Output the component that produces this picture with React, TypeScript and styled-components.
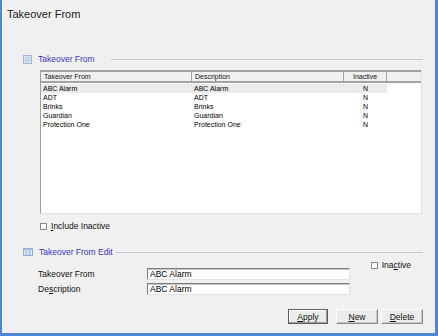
import React from 'react';
import styled, { createGlobalStyle } from 'styled-components';

interface TakeoverRow {
  name: string;
  description: string;
  inactive: string;
}

const rows: TakeoverRow[] = [
  { name: 'ABC Alarm', description: 'ABC Alarm', inactive: 'N' },
  { name: 'ADT', description: 'ADT', inactive: 'N' },
  { name: 'Brinks', description: 'Brinks', inactive: 'N' },
  { name: 'Guardian', description: 'Guardian', inactive: 'N' },
  { name: 'Protection One', description: 'Protection One', inactive: 'N' },
];

const GridIcon = () => (
  <svg width="9" height="9" viewBox="0 0 9 9">
    <rect x="0.5" y="0.5" width="8" height="8" fill="#d6e4f5" stroke="#9db5d6" />
    <rect x="2" y="2" width="5" height="5" fill="#c4d6ec" />
  </svg>
);

const FormIcon = () => (
  <svg width="10" height="8" viewBox="0 0 10 8">
    <rect x="0.5" y="0.5" width="9" height="7" fill="#e4ecf7" stroke="#93acd0" />
    <rect x="1" y="1" width="8" height="1.5" fill="#a9c0e0" />
    <rect x="2" y="3.5" width="2" height="1" fill="#93acd0" />
    <rect x="5" y="3.5" width="3" height="1" fill="#93acd0" />
    <rect x="2" y="5.5" width="2" height="1" fill="#93acd0" />
    <rect x="5" y="5.5" width="3" height="1" fill="#93acd0" />
  </svg>
);

function App() {
  return (
    <>
      <GlobalStyle />
      <Window>
        <Title>Takeover From</Title>

        <Section>
          <SectionHeader>
            <GridIcon />
            <SectionTitle>Takeover From</SectionTitle>
            <SectionRule $offset={16} />
          </SectionHeader>

          <Grid>
            <HeaderRow>
              <HeaderCell $width={151}>Takeover From</HeaderCell>
              <HeaderCell $width={152}>Description</HeaderCell>
              <HeaderCell $width={43} $center>
                Inactive
              </HeaderCell>
              <HeaderFiller />
            </HeaderRow>
            <GridBody>
              {rows.map((row, i) => (
                <Row key={row.name} $selected={i === 0}>
                  <Cell $width={151}>{row.name}</Cell>
                  <Cell $width={152}>{row.description}</Cell>
                  <Cell $width={43} $center>
                    {row.inactive}
                  </Cell>
                </Row>
              ))}
            </GridBody>
          </Grid>

          <CheckRow>
            <CheckBox />
            <span>
              <u>I</u>nclude Inactive
            </span>
          </CheckRow>
        </Section>

        <EditSection>
          <SectionHeader>
            <FormIcon />
            <SectionTitle>Takeover From Edit</SectionTitle>
            <SectionRule $offset={2} />
          </SectionHeader>

          <FormBody>
            <Fields>
              <FieldRow>
                <Label>Takeover From</Label>
                <TextBox defaultValue="ABC Alarm" />
              </FieldRow>
              <FieldRow>
                <Label>
                  De<u>s</u>cription
                </Label>
                <TextBox defaultValue="ABC Alarm" />
              </FieldRow>
            </Fields>
            <InactiveCheck>
              <CheckBox />
              <span>
                Ina<u>c</u>tive
              </span>
            </InactiveCheck>
          </FormBody>

          <Buttons>
            <Button $primary>
              <u>A</u>pply
            </Button>
            <Button>
              <u>N</u>ew
            </Button>
            <Button>
              <u>D</u>elete
            </Button>
          </Buttons>
        </EditSection>
      </Window>
    </>
  );
}

export default App;

const GlobalStyle = createGlobalStyle`
  html, body {
    margin: 0;
    padding: 0;
    background: #ffffff;
  }
  * {
    box-sizing: border-box;
  }
`;

const Window = styled.div`
  width: 438px;
  height: 336px;
  display: flex;
  flex-direction: column;
  background: #f0f0f0;
  border-left: 2px solid #4f87d8;
  border-right: 3px solid #4f87d8;
  border-bottom: 3px solid #4f87d8;
  font-family: 'Liberation Sans', Arial, sans-serif;
  color: #1e1e1e;
  overflow: hidden;
`;

const Title = styled.div`
  margin: 7px 0 0 5px;
  height: 14px;
  line-height: 14px;
  font-size: 11px;
  color: #1a1a1a;
`;

const Section = styled.div`
  margin-top: 32px;
  padding: 0 12px 0 21px;
  display: flex;
  flex-direction: column;
`;

const EditSection = styled(Section)`
  margin-top: 15px;
`;

const SectionHeader = styled.div`
  height: 12px;
  display: flex;
  align-items: center;

  svg {
    flex: none;
    margin-right: 6px;
  }
`;

const SectionTitle = styled.span`
  font-size: 8.5px;
  color: #3a35cf;
  white-space: nowrap;
`;

const SectionRule = styled.div<{ $offset: number }>`
  flex: 1;
  height: 1px;
  margin-left: ${(p) => p.$offset}px;
  background: #c9c9c9;
`;

const Grid = styled.div`
  margin: 5px 0 0 17px;
  width: 382px;
  height: 144px;
  display: flex;
  flex-direction: column;
  background: #ffffff;
  border-left: 1px solid #a0a0a0;
  border-bottom: 1px solid #e2e2e2;
  border-right: 1px solid #e2e2e2;
  font-size: 7px;
  color: #000;
`;

const HeaderRow = styled.div`
  height: 13px;
  display: flex;
  background: #f0f0f0;
  border-top: 2px solid #a3a3a3;
  border-bottom: 2px solid #a3a3a3;
`;

const HeaderCell = styled.div<{ $width: number; $center?: boolean }>`
  width: ${(p) => p.$width}px;
  flex: none;
  padding-left: ${(p) => (p.$center ? 0 : 3)}px;
  text-align: ${(p) => (p.$center ? 'center' : 'left')};
  line-height: 9px;
  border-right: 1px solid #a3a3a3;
  color: #111;
`;

const HeaderFiller = styled.div`
  flex: 1;
`;

const GridBody = styled.div`
  flex: 1;
  padding-top: 1px;
`;

const Row = styled.div<{ $selected?: boolean }>`
  height: 9px;
  width: 346px;
  display: flex;
  background: ${(p) => (p.$selected ? '#ebebeb' : 'transparent')};
`;

const Cell = styled.div<{ $width: number; $center?: boolean }>`
  width: ${(p) => p.$width}px;
  flex: none;
  padding-left: ${(p) => (p.$center ? 0 : 2)}px;
  text-align: ${(p) => (p.$center ? 'center' : 'left')};
  line-height: 9px;
  white-space: nowrap;
`;

const CheckRow = styled.label`
  margin: 7px 0 0 17px;
  height: 10px;
  display: flex;
  align-items: center;
  gap: 4px;
  font-size: 8.5px;
  color: #111;
`;

const CheckBox = styled.span`
  width: 7px;
  height: 7px;
  flex: none;
  background: #ffffff;
  border: 1px solid #8a8a8a;
`;

const FormBody = styled.div`
  display: flex;
  justify-content: space-between;
`;

const Fields = styled.div`
  padding: 10px 0 0 15px;
  display: flex;
  flex-direction: column;
  gap: 3px;
`;

const FieldRow = styled.div`
  display: flex;
  align-items: center;
  height: 12px;
`;

const Label = styled.span`
  width: 109px;
  font-size: 8.5px;
  color: #111;
`;

const TextBox = styled.input`
  width: 203px;
  height: 12px;
  padding: 0 2px;
  background: #ffffff;
  border: 1px solid;
  border-color: #7f7f7f #e3e3e3 #e3e3e3 #7f7f7f;
  box-shadow: inset 0 1px 0 #c4c4c4;
  font-family: 'Liberation Sans', Arial, sans-serif;
  font-size: 8.5px;
  color: #000;
  outline: none;
`;

const InactiveCheck = styled(CheckRow)`
  margin: 2px 12px 0 0;
`;

const Buttons = styled.div`
  margin-top: 14px;
  display: flex;
  justify-content: flex-end;
  gap: 3px;
`;

const Button = styled.button<{ $primary?: boolean }>`
  width: ${(p) => (p.$primary ? 40 : 42)}px;
  height: 15px;
  margin-right: ${(p) => (p.$primary ? 5 : 0)}px;
  padding: 0;
  background: #ececec;
  border: 1px solid;
  border-color: ${(p) => (p.$primary ? '#5e5e5e' : '#ffffff #8a8a8a #8a8a8a #ffffff')};
  box-shadow: ${(p) => (p.$primary ? 'inset -1px -1px 0 #9a9a9a, inset 1px 1px 0 #ffffff' : 'inset -1px -1px 0 #c8c8c8')};
  font-family: 'Liberation Sans', Arial, sans-serif;
  font-size: 8.5px;
  color: #111;
`;
